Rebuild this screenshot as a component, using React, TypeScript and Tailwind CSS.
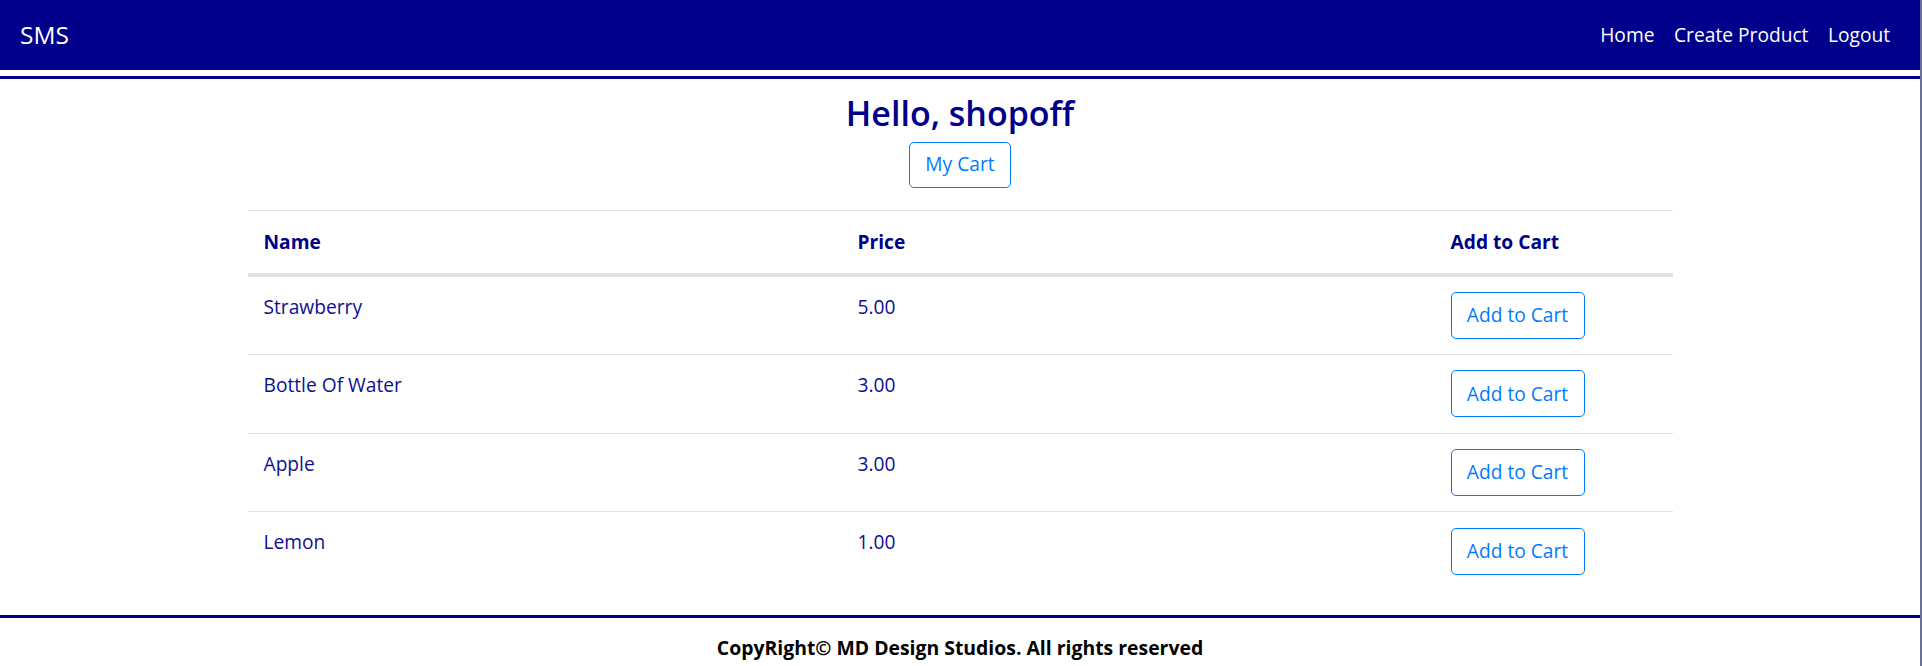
import React from 'react'

const products = [
    { name: 'Strawberry', price: '5.00' },
    { name: 'Bottle Of Water', price: '3.00' },
    { name: 'Apple', price: '3.00' },
    { name: 'Lemon', price: '1.00' },
]

function Navbar() {
    return (
        <nav className="h-[70px] bg-[#00008b] flex items-center justify-between pl-[20px] pr-[20px]">
            <a href="#" className="text-[24.5px] leading-[1.5] text-white">SMS</a>
            <ul className="flex items-center">
                {['Home', 'Create Product', 'Logout'].map((link) => (
                    <li key={link}>
                        <a href="#" className="block px-[9.8px] text-[19.2px] leading-[1.5] text-white">{link}</a>
                    </li>
                ))}
            </ul>
        </nav>
    )
}

function ProductTable() {
    return (
        <div className="w-[1425px] mx-auto border-t border-[#dee2e6] text-[19.2px] leading-[1.5]">
            <div className="grid grid-cols-[594px_593px_238px] border-b-4 border-[#dee2e6] font-bold text-[#00008b]">
                <div className="px-[16px] pt-[17px] pb-[16px]">Name</div>
                <div className="px-[16px] pt-[17px] pb-[16px]">Price</div>
                <div className="px-[16px] pt-[17px] pb-[16px]">Add to Cart</div>
            </div>
            {products.map((p, i) => (
                <div key={p.name} className={`grid grid-cols-[594px_593px_238px] text-[#0f0f90] ${i > 0 ? 'border-t border-[#dee2e6]' : ''}`}>
                    <div className="px-[16px] pt-[16px]">{p.name}</div>
                    <div className="px-[16px] pt-[16px]">{p.price}</div>
                    <div className="px-[16px] py-[15.3px]">
                        <button className="h-[47px] w-[134px] border border-[#007bff] rounded-[5px] text-[#007bff] text-[19.2px]">Add to Cart</button>
                    </div>
                </div>
            ))}
        </div>
    )
}

export default function App() {
    return (
        <div className="min-h-[666px] bg-white border-r-2 border-[#6b7094] font-['Open_Sans',sans-serif]">
            <Navbar />
            <div className="h-[3px] mt-[6px] bg-[#00008b]" />
            <main className="flex flex-col items-center">
                <h2 className="mt-[14px] text-[34px] leading-[1.2] font-semibold text-[#00008b]">Hello, shopoff</h2>
                <button className="mt-[8px] h-[46px] w-[102px] border border-[#007bff] rounded-[5px] text-[#007bff] text-[19.2px]">My Cart</button>
            </main>
            <div className="mt-[22px]">
                <ProductTable />
            </div>
            <footer className="mt-[25px] border-t-[3px] border-[#00008b] text-center">
                <p className="pt-[15px] text-[19.4px] font-bold text-black leading-[1.5]">CopyRight© MD Design Studios. All rights reserved</p>
            </footer>
        </div>
    )
}
